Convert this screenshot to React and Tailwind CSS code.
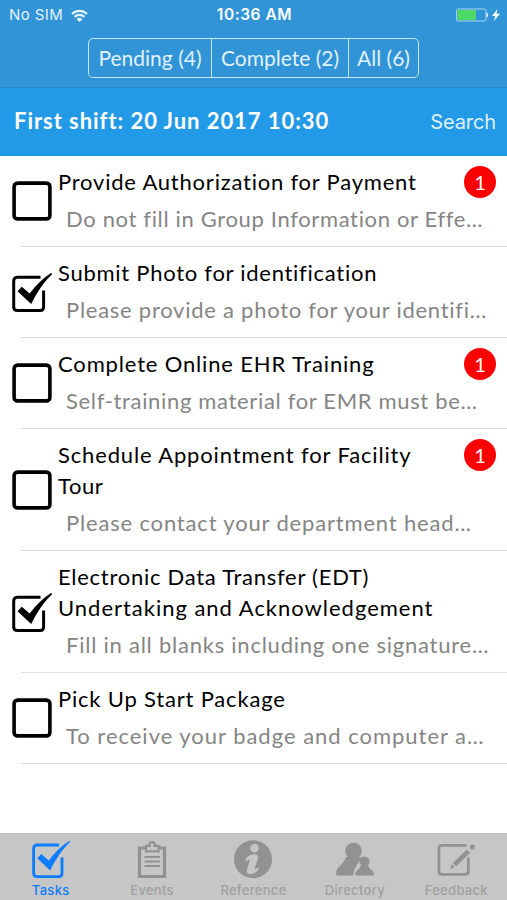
import clsx from "clsx";

const tasks = [
  {
    lines: [{ text: "Provide Authorization for Payment", spacing: "tracking-[0.78px]" }],
    detail: "Do not fill in Group Information or Effe…",
    detailSpacing: "tracking-[0.65px]",
    badge: 1,
  },
  {
    lines: [{ text: "Submit Photo for identification", spacing: "tracking-[0.73px]" }],
    detail: "Please provide a photo for your identifi…",
    detailSpacing: "tracking-[0.74px]",
    done: true,
  },
  {
    lines: [{ text: "Complete Online EHR Training", spacing: "tracking-[0.84px]" }],
    detail: "Self-training material for EMR must be…",
    detailSpacing: "tracking-[0.66px]",
    badge: 1,
  },
  {
    lines: [
      { text: "Schedule Appointment for Facility", spacing: "tracking-[0.85px]" },
      { text: "Tour", spacing: "tracking-[0.6px]" },
    ],
    detail: "Please contact your department head…",
    detailSpacing: "tracking-[0.83px]",
    badge: 1,
  },
  {
    lines: [
      { text: "Electronic Data Transfer (EDT)", spacing: "tracking-[0.73px]" },
      { text: "Undertaking and Acknowledgement", spacing: "tracking-[0.98px]" },
    ],
    detail: "Fill in all blanks including one signature…",
    detailSpacing: "tracking-[0.76px]",
    done: true,
  },
  {
    lines: [{ text: "Pick Up Start Package", spacing: "tracking-[0.81px]" }],
    detail: "To receive your badge and computer a…",
    detailSpacing: "tracking-[0.98px]",
  },
];

function CheckedIcon({ className }) {
  return (
    <svg viewBox="0 0 40 40" className={className}>
      <path
        d="M28.5 5.300H5.500Q1.700 5.300 1.700 9v26Q1.700 38.500 5.500 38.500h22.800Q31.600 38.500 31.600 35V18.500"
        fill="none"
        stroke="currentColor"
        strokeWidth="3"
      />
      <path d="M5.500 19.200L9.800 14.800l7.800 6.800C24 13 31 6 39.400 0.800L40 2.200C32 10 26 18.500 19.200 32Z" fill="currentColor" />
    </svg>
  );
}

function EmptyIcon({ className }) {
  return (
    <svg viewBox="0 0 40 40" className={className}>
      <rect x="2.100" y="2.100" width="35.800" height="35.800" rx="3.500" fill="none" stroke="currentColor" strokeWidth="3.600" />
    </svg>
  );
}

function ClipboardIcon() {
  return (
    <svg viewBox="0 0 40 40" className="size-10">
      <path d="M13 9H7.500v28.500h25V9H27" fill="none" stroke="currentColor" strokeWidth="3.200" />
      <path d="M14 6.800h3.500V4.500a2.600 2 0 0 1 5 0v2.300H26.500v5.500H14Z" fill="none" stroke="currentColor" strokeWidth="2.200" />
      <path d="M12.500 18h15.500M12.500 22.500h15.500M12.500 27h15.500" stroke="currentColor" strokeWidth="1.800" />
    </svg>
  );
}

function InfoIcon() {
  return (
    <svg viewBox="0 0 40 40" className="size-10">
      <circle cx="20" cy="20.300" r="19" fill="currentColor" />
      <circle cx="21.500" cy="9.200" r="4.200" fill="#c6c6c6" />
      <path
        d="M12 20.800c2.500-3.700 6-5.500 9.500-5.500 3.300 0 4.300 2 3.300 5l-2.900 8.500c-.3 1.100.2 1.400 1 .9l2.400-1.300.9 1.200c-2.800 3.900-5.800 5.500-8.900 5.500-3 0-4.300-2-3.300-5l2.800-8.500c.3-1-.4-1.200-1.200-.7l-2.400 1.200Z"
        fill="#c6c6c6"
      />
    </svg>
  );
}

function PeopleIcon() {
  return (
    <svg viewBox="0 0 40 40" className="size-10">
      <circle cx="18.500" cy="12" r="8.300" fill="currentColor" />
      <path d="M1.300 36.500v-3.500c0-5 8-8 9.500-15h15c.5 5-7.300 9-7.500 18.500Z" fill="currentColor" />
      <circle cx="29.500" cy="22.500" r="5" fill="currentColor" />
      <path d="M20.300 36.500c-.4-6.500 4.600-5 5.500-10h7.500c1.200 4.500 6 4.500 5.700 10Z" fill="currentColor" />
    </svg>
  );
}

function ComposeIcon() {
  return (
    <svg viewBox="0 0 40 40" className="size-10">
      <path
        d="M30.500 6.400H5.500Q2.900 6.400 2.900 9v23.500Q2.900 35.300 5.500 35.300h24Q32.300 35.300 32.300 32.500V18.500"
        fill="none"
        stroke="currentColor"
        strokeWidth="2.800"
      />
      <path d="M14 30.200l1.700-5 3 3Z" fill="currentColor" />
      <path d="M16.800 24L30.800 10.500l3.500 3.300L20.200 27.300Z" fill="currentColor" />
      <circle cx="36.300" cy="8" r="2.600" fill="currentColor" />
    </svg>
  );
}

const tabs = [
  { label: "Tasks", icon: <CheckedIcon className="size-[38px]" />, active: true },
  { label: "Events", icon: <ClipboardIcon /> },
  { label: "Reference", icon: <InfoIcon /> },
  { label: "Directory", icon: <PeopleIcon /> },
  { label: "Feedback", icon: <ComposeIcon /> },
];

function StatusBar() {
  return (
    <div className="grid h-[30px] grid-cols-3 items-center pr-[7px] pl-[9px] font-['Inter',sans-serif] text-[15px] text-[#e4f2fc]">
      <div className="flex items-center gap-2">
        <span className="tracking-[0.4px]">No SIM</span>
        <svg viewBox="0 0 17 13" className="h-[13px] w-[17px]">
          <path d="M1 5a10.700 10.700 0 0 1 15 0M3.600 7.900a7 7 0 0 1 9.800 0" fill="none" stroke="currentColor" strokeWidth="2.200" />
          <path d="M5.600 10.200a4.100 4.100 0 0 1 5.800 0L8.500 13Z" fill="currentColor" />
        </svg>
      </div>
      <span className="text-center text-[15.500px] font-semibold tracking-[0.55px] whitespace-nowrap text-white">10:36 AM</span>
      <div className="flex items-center justify-end gap-[3px]">
        <svg viewBox="0 0 34 14" className="h-[14px] w-[34px]">
          <rect x="1.500" y="1" width="29.500" height="12" rx="1.500" fill="none" stroke="#a9d6f5" />
          <rect x="2.500" y="2" width="18.500" height="10" fill="#4cd964" />
          <path d="M31.500 4.500c2.200.5 2.200 4.500 0 5Z" fill="currentColor" />
        </svg>
        <svg viewBox="0 0 8 12" className="h-3 w-2">
          <path d="M5.500 0L0 7h3.300L2 12l6-7.300H4.500Z" fill="white" />
        </svg>
      </div>
    </div>
  );
}

function Segments() {
  return (
    <div className="mx-auto flex h-10 w-[331px] rounded-[5px] border-[1.500px] border-[#c8e6fb] text-[21px] leading-[38px] text-[#e0f1fd]">
      <span className="w-[122px] text-center whitespace-nowrap">Pending (4)</span>
      <span className="w-[138px] border-x border-[#c8e6fb] text-center whitespace-nowrap">Complete (2)</span>
      <span className="flex-1 text-center whitespace-nowrap">All (6)</span>
    </div>
  );
}

function TaskRow({ task }) {
  return (
    <li>
      <div className="flex">
        <div className="flex w-[58px] shrink-0 items-center pl-3">
          {task.done ? <CheckedIcon className="size-10" /> : <EmptyIcon className="size-10" />}
        </div>
        <div className="flex-1 pt-[10px] pb-3">
          <div className="flex justify-between pr-[11px]">
            <h2 className="text-[22px] leading-[31px] whitespace-nowrap">
              {task.lines.map((line) => (
                <span key={line.text} className={clsx("block", line.spacing)}>
                  {line.text}
                </span>
              ))}
            </h2>
            {task.badge && (
              <span className="-mb-1 flex size-8 shrink-0 items-center justify-center rounded-full bg-[#fe0000] pb-px text-[20px] text-white">
                {task.badge}
              </span>
            )}
          </div>
          <p className={clsx("mt-[6px] pl-2 text-[22px] leading-[31px] whitespace-nowrap text-[#858585]", task.detailSpacing)}>
            {task.detail}
          </p>
        </div>
      </div>
      <div className="ml-[21px] h-px bg-[#dcdcdc]" />
    </li>
  );
}

export default function App() {
  return (
    <div className="flex h-[900px] w-[507px] flex-col overflow-hidden bg-white font-['Lato',sans-serif] text-black">
      <header className="h-[88px] border-b border-[#2686c8] bg-[#3094d7]">
        <StatusBar />
        <div className="pt-2">
          <Segments />
        </div>
      </header>
      <div className="flex h-[68px] items-center justify-between bg-[#239ae7] pr-[11px] pl-[14px] text-white">
        <h1 className="pb-[3px] text-[22px] font-bold tracking-[0.95px] whitespace-nowrap">First shift: 20 Jun 2017 10:30</h1>
        <span className="font-['Inter',sans-serif] text-[20px] tracking-[-0.1px] text-[#dff1fd]">Search</span>
      </div>
      <ul className="flex-1">
        {tasks.map((task) => (
          <TaskRow key={task.detail} task={task} />
        ))}
      </ul>
      <nav className="grid h-[67px] grid-cols-5 bg-[#c6c6c6] font-['Inter',sans-serif]">
        {tabs.map((tab) => (
          <div key={tab.label} className={clsx("flex flex-col items-center pt-[6px]", tab.active ? "text-[#0b7dfd]" : "text-[#929292]")}>
            <div className="flex h-10 items-center">{tab.icon}</div>
            <span className={clsx("mt-[3px] text-[13px] leading-4 font-medium tracking-[0.3px]", !tab.active && "text-[#a0a0a0]")}>
              {tab.label}
            </span>
          </div>
        ))}
      </nav>
    </div>
  );
}
